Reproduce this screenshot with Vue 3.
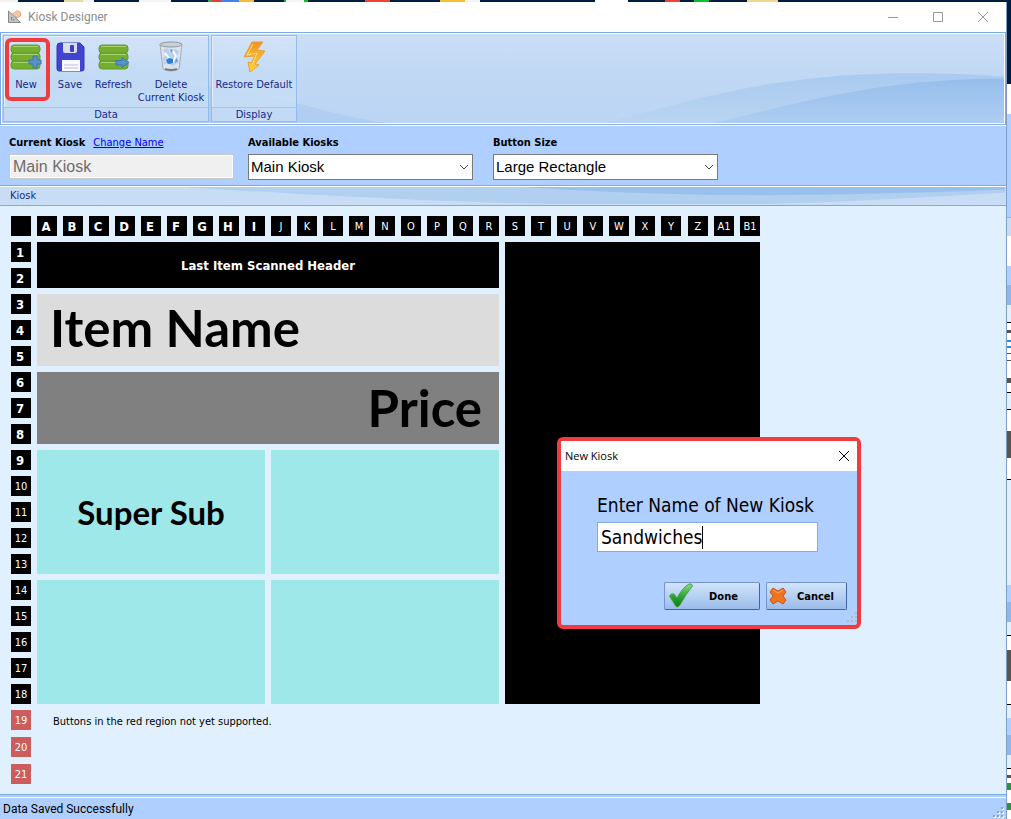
<script setup>
import { ref } from 'vue'

const columns = [...'ABCDEFGHIJKLMNOPQRSTUVWXYZ', 'A1', 'B1']
const rows = Array.from({ length: 21 }, (_, i) => i + 1)
const currentKiosk = ref('Main Kiosk')
const newName = ref('Sandwiches')
</script>

<template>
  <div class="screen">
    <div class="window">
      <header class="titlebar">
        <svg class="app-icon" viewBox="0 0 16 16" width="16" height="16">
          <path d="M1.500 2V13.500H13.500ZM4.500 8L7.500 11H4.500Z" fill="#c4c6c9" fill-rule="evenodd" stroke="#85898e" />
          <path d="M5.500 5L10.500 1.500L13.500 3.500L13.500 7L10 9Z" fill="#f9d3b0" stroke="#e3a57a" />
          <path d="M7.500 6.500L12 3M9 8L13.500 4.500" stroke="#efb88e" />
        </svg>
        <h1>Kiosk Designer</h1>
        <div class="controls">
          <button aria-label="Minimize"><svg width="12" height="12" viewBox="0 0 12 12"><path d="M1 6.500H11" /></svg></button>
          <button aria-label="Maximize"><svg width="12" height="12" viewBox="0 0 12 12"><path d="M1.500 1.500H10.500V10.500H1.500Z" /></svg></button>
          <button aria-label="Close"><svg width="12" height="12" viewBox="0 0 12 12"><path d="M1 1L11 11M11 1L1 11" /></svg></button>
        </div>
      </header>

      <nav class="ribbon">
        <svg class="swoosh" viewBox="0 0 1000 90" preserveAspectRatio="none">
          <defs>
            <linearGradient id="waveA" x1="0" y1="0" x2="0" y2="1"><stop offset="0" stop-color="#a9caef" /><stop offset="1" stop-color="#b9d4f1" /></linearGradient>
            <linearGradient id="waveB" x1="0" y1="0" x2="0" y2="1"><stop offset="0" stop-color="#96beeb" /><stop offset="1" stop-color="#aecdf1" /></linearGradient>
          </defs>
          <path d="M0 44C130 42 240 54 295 70C330 80 355 86 385 90H0Z" fill="#a9caef" opacity=".7" />
          <path d="M600 90C700 66 790 28 1000 43V90Z" fill="url(#waveA)" />
          <path d="M710 90C800 68 880 45 1000 45V90Z" fill="url(#waveB)" />
        </svg>
        <section class="group">
          <div class="tools">
            <button class="tool new">
              <svg width="32" height="32" viewBox="0 0 32 32">
                <g fill="#76ae31" stroke="#5f9c2c"><rect x="1" y="4" width="29" height="8" rx="3" /><rect x="1" y="12" width="29" height="8" rx="3" /><rect x="1" y="20" width="29" height="8" rx="3" /></g>
                <path d="M3 5.500H28M3 13.500H28M3 21.500H28" stroke="#a9d26f" />
                <path d="M23 15H27V19H31V23H27V27H23V23H19V19H23Z" fill="#5792cb" stroke="#3b76b1" />
              </svg>
              <span>New</span>
            </button>
            <button class="tool save">
              <svg width="32" height="32" viewBox="0 0 32 32">
                <path d="M6 2H26L30 6V28Q30 30 28 30H5Q3 30 3 28V5Q3 2 6 2Z" fill="#4144d2" stroke="#3436ad" />
                <path d="M9 2H23V10Q23 12 21 12H11Q9 12 9 10Z" fill="#d9ddec" /><rect x="16" y="4" width="4" height="7" rx="1" fill="#3d40c4" />
                <path d="M8 19H26V30H8Z" fill="#fafafe" /><path d="M10 24H24M10 27H24" stroke="#bbbde0" />
              </svg>
              <span>Save</span>
            </button>
            <button class="tool refresh">
              <svg width="32" height="32" viewBox="0 0 32 32">
                <g fill="#76ae31" stroke="#5f9c2c"><rect x="1" y="4" width="29" height="8" rx="3" /><rect x="1" y="12" width="29" height="8" rx="3" /><rect x="1" y="20" width="29" height="8" rx="3" /></g>
                <path d="M3 5.500H28M3 13.500H28M3 21.500H28" stroke="#a9d26f" />
                <path d="M18 19.500H24V16.500L31 21.500L24 26.500V24H18Z" fill="#5792cb" stroke="#3b76b1" />
              </svg>
              <span>Refresh</span>
            </button>
            <button class="tool delete">
              <svg width="32" height="32" viewBox="0 0 32 32">
                <path d="M5 3L8 28Q16 32 24 28L27 3Z" fill="#dce3eb" stroke="#a5adb7" />
                <ellipse cx="16" cy="3.500" rx="11" ry="2.500" fill="#cbd1d9" stroke="#8f969f" />
                <path d="M8 9L13 7L15 12L20 8L24 10L22 16L24 21L18 25L12 22L9 24L8 17L11 14Z" fill="#b8d0eb" />
                <path d="M10 12L14 17L11 21M18 10L21 15L17 22" stroke="#f8fbff" stroke-width="2" fill="none" />
                <path d="M11 19L14 17L18 18V22L14 23L12 22Z" fill="#2f7bd6" />
                <path d="M15 8L18 9L16 12ZM21 17L23 20L20 22Z" fill="#679bd7" />
                <path d="M10 28Q16 30 22 28" stroke="#777f89" stroke-width="2" fill="none" />
              </svg>
              <span>Delete<br />Current Kiosk</span>
            </button>
          </div>
          <h2>Data</h2>
        </section>
        <section class="group">
          <div class="tools">
            <button class="tool restore">
              <svg width="32" height="32" viewBox="0 0 32 32">
                <defs><linearGradient id="bolt" x1="0" y1="0" x2="0" y2="1"><stop offset="0" stop-color="#ee9126" /><stop offset=".5" stop-color="#f9b72e" /><stop offset="1" stop-color="#ffd72b" /></linearGradient></defs>
                <path d="M14 1H25L19 9L27 10L17 23L21 24L12 31L10 21L13 22L17 15L6 16Z" fill="url(#bolt)" stroke="#e5a03a" />
                <path d="M15 3L9 14L19 12L14 24" stroke="#ffdb82" fill="none" />
              </svg>
              <span>Restore Default</span>
            </button>
          </div>
          <h2>Display</h2>
        </section>
      </nav>

      <form class="filters" @submit.prevent>
        <div class="field">
          <div class="labels"><label for="current">Current Kiosk</label><a href="#">Change Name</a></div>
          <input id="current" v-model="currentKiosk" disabled />
        </div>
        <div class="field">
          <label for="available">Available Kiosks</label>
          <div class="select">
            <select id="available"><option>Main Kiosk</option></select>
            <svg width="10" height="6" viewBox="0 0 10 6"><path d="M1 1L5 5L9 1" /></svg>
          </div>
        </div>
        <div class="field">
          <label for="size">Button Size</label>
          <div class="select">
            <select id="size"><option>Large Rectangle</option></select>
            <svg width="10" height="6" viewBox="0 0 10 6"><path d="M1 1L5 5L9 1" /></svg>
          </div>
        </div>
      </form>

      <div class="caption">
        <svg class="swoosh" viewBox="0 0 1000 18" preserveAspectRatio="none">
          <path d="M180 0C350 11 440 16 560 18H760C860 15 930 10 1000 6V0Z" fill="#b1cfee" />
          <path d="M520 0C700 12 800 10 1000 3V0Z" fill="#98c0ec" />
        </svg>
        <h2>Kiosk</h2>
      </div>

      <main class="canvas">
        <div class="board">
          <span class="cell corner"></span>
          <span v-for="(c, i) in columns" :key="c" class="cell col" :class="{ strong: i < 9 }">{{ c }}</span>
          <span v-for="r in rows" :key="r" class="cell row" :class="{ strong: r < 10, red: r > 18 }">{{ r }}</span>
          <div class="block header">Last Item Scanned Header</div>
          <div class="block name">Item Name</div>
          <div class="block price">Price</div>
          <button class="block item one">Super Sub</button>
          <button class="block item two" aria-label="Empty button"></button>
          <button class="block item three" aria-label="Empty button"></button>
          <button class="block item four" aria-label="Empty button"></button>
          <div class="block list"></div>
          <p class="note">Buttons in the red region not yet supported.</p>
        </div>

        <section class="dialog" role="dialog" aria-labelledby="dialog-title">
          <header>
            <h2 id="dialog-title">New Kiosk</h2>
            <button aria-label="Close dialog"><svg width="12" height="12" viewBox="0 0 12 12"><path d="M1 1L11 11M11 1L1 11" /></svg></button>
          </header>
          <form @submit.prevent>
            <label for="kiosk-name">Enter Name of New Kiosk</label>
            <div class="namebox">
              <input id="kiosk-name" v-model="newName" size="8" /><i class="caret"></i>
            </div>
            <div class="actions">
              <button class="done">
                <svg width="26" height="26" viewBox="0 0 26 26">
                  <defs><linearGradient id="tick" x1="0" y1="0" x2="0" y2="1"><stop offset="0" stop-color="#8fdc83" /><stop offset=".5" stop-color="#35a73a" /><stop offset="1" stop-color="#087d10" /></linearGradient></defs>
                  <path d="M1.500 13Q3 10 6 11L9 15Q15 4 21 1Q24 0 24.500 3Q18 11 12 22Q9 26 7 22Z" fill="url(#tick)" stroke="#48a64b" />
                </svg>
                <span>Done</span>
              </button>
              <button class="cancel">
                <svg width="18" height="18" viewBox="0 0 18 18">
                  <path d="M4 1L9 4L14 1L17 5L14 9L17 13L14 17L9 14L4 17L1 13L4 9L1 5Z" fill="#ef7420" stroke="#cf5312" stroke-linejoin="round" />
                  <path d="M4 3L9 6L14 3" stroke="#f9a365" fill="none" />
                </svg>
                <span>Cancel</span>
              </button>
            </div>
          </form>
          <svg class="grip" width="12" height="12" viewBox="0 0 12 12"><path d="M8 0h2v2h-2zM4 4h2v2H4zM8 4h2v2H8zM0 8h2v2H0zM4 8h2v2H4zM8 8h2v2H8z" fill="#b9b9b0" /></svg>
        </section>
      </main>

      <footer class="status">
        <span>Data Saved Successfully</span>
        <svg width="12" height="12" viewBox="0 0 12 12"><path d="M9 1h2v2H9zM5 5h2v2H5zM9 5h2v2H9zM1 9h2v2H1zM5 9h2v2H5zM9 9h2v2H9z" fill="#fff" /><path d="M8 0h2v2H8zM4 4h2v2H4zM8 4h2v2H8zM0 8h2v2H0zM4 8h2v2H4zM8 8h2v2H8z" fill="#99a0a8" /></svg>
      </footer>
    </div>
    <aside class="behind" aria-hidden="true"></aside>
  </div>
</template>

<style>
body { margin: 0; }
</style>

<style scoped>
* { box-sizing: border-box; }
h1, h2, p { margin: 0; font-weight: 400; }
button { border: 0; padding: 0; margin: 0; background: none; font: inherit; color: inherit; }
svg { display: block; }
.screen {
  min-height: 100vh;
  display: flex;
  padding-top: 2px;
  font: 11px/13px "DejaVu Sans Condensed", "DejaVu Sans", sans-serif;
  color: #000;
  background: linear-gradient(90deg, #f4f4f4 0 18px, #001c40 18px 64px, #e2d9a4 64px 83px, #f4f4f4 83px 94px, #001c40 94px 139px, #f4f4f4 139px 171px, #001c40 171px 208px, #3aa757 208px 212px, #dd4238 212px 221px, #4083ec 221px 239px, #f5bd33 239px 254px, #001c40 254px 284px, #00c22a 284px 286px, #f4f4f4 286px 304px, #00c22a 304px 308px, #001c40 308px 365px, #e43 365px 390px, #001c40 390px 440px, #f5bd33 440px 465px, #f4f4f4 465px 480px, #001c40 480px 595px, #fff 595px 628px, #001c40 628px 665px, #e43 665px 680px, #001c40 680px 694px, #00c22a 694px 709px, #001c40 709px 747px, #f0d68e 747px 778px, #001c40 778px);
}
.window { flex: 1; min-width: 0; display: flex; flex-direction: column; border-right: 1px solid #7f9fc8; background: #e1f0fe; }
.behind {
  width: 4px;
  background: linear-gradient(#001c40 0 82px, #fff 82px 112px, #aecfff 112px 215px, #8fb5e6 215px 216px, #c8dcf4 216px 234px, #fff 234px 264px, #aecfff 264px 283px, #91b7e8 283px 303px, #e1f0fe 303px 320px, #000 320px 321px, #fff 321px 328px, #555 328px 331px, #fff 331px 338px, #2090e0 338px 340px, #fff 340px 344px, #2090e0 344px 346px, #fff 346px 351px, #555 351px 352px, #fff 352px 358px, #555 358px 359px, #fff 359px 376px, #555 376px 381px, #fff 381px 390px, #000 390px 391px, #e1f0fe 391px 407px, #000 407px 408px, #fff 408px 429px, #555 429px 456px, #fff 456px 477px, #000 477px 478px, #e1f0fe 478px 583px, #aecfff 583px 600px, #91b7e8 600px 620px, #e1f0fe 620px 633px, #000 633px 634px, #fff 634px 648px, #555 648px 679px, #fff 679px 702px, #000 702px 703px, #e1f0fe 703px 716px, #aecfff 716px 733px, #91b7e8 733px 753px, #e1f0fe 753px 766px, #000 766px 767px, #fff 767px 773px, #555 773px 776px, #fff 776px 781px, #2f9048 781px 788px, #fff 788px 801px, #2f9048 801px 808px, #fff 808px);
}
.titlebar { height: 30px; display: flex; align-items: center; background: #fff; padding: 0 1px 0 7px; }
.titlebar h1 { margin-left: 5px; font: 12px/16px Roboto, sans-serif; color: #8d8d8d; flex: 1; }
.app-icon { fill: none; }
.controls { display: flex; }
.controls button { width: 45px; height: 28px; display: flex; align-items: center; justify-content: center; }
.controls path { fill: none; stroke: #999; }

.ribbon { position: relative; height: 93px; display: flex; gap: 2px; padding: 2px; border: 1px solid #7caae4; border-bottom-color: #8cb0e5; box-shadow: inset 0 0 0 1px #fff; background: linear-gradient(#cbdff6, #c0d8f3 45%, #bcd5f3); }
.swoosh { position: absolute; inset: 1px; width: calc(100% - 2px); height: calc(100% - 2px); }
.group { position: relative; border: 1px solid #94bbe9; box-shadow: inset 1px 1px 0 #e2eefb; display: flex; flex-direction: column; color: #15298b; text-align: center; background: linear-gradient(#d4e4f8cc, #c4dbf5cc 45%, #cfe2f8cc); }
.tools { flex: 1; display: flex; align-items: flex-start; padding: 3px 3px 0; }
.tool { display: flex; flex-direction: column; align-items: center; justify-content: flex-start; line-height: 13px; }
.tool svg { margin: 2px 0 5px; }
.tool.new { width: 45px; height: 63px; border: 4px solid #f03c3f; border-radius: 6px; margin-top: -1px; margin-left: -2px; padding-right: 3px; }
.tool.new svg { margin-top: -1px; }
.tool.save { width: 40px; }
.tool.refresh { width: 47px; }
.tool.delete { width: 68px; }
.tool.restore { width: 78px; white-space: nowrap; }
.group h2 { height: 14px; font-size: 11px; line-height: 14px; border-top: 1px solid #a5c6ed; background: #c2daf5; }

.filters { height: 60px; display: flex; gap: 14px; padding: 10px 9px 0; background: #aecfff; border-top: 1px solid #fff; }
.field { width: 225px; }
.field + .field + .field { margin-left: 6px; }
.field label { display: block; font-weight: 700; line-height: 13px; }
.labels { display: flex; gap: 8px; }
.labels a { color: #0000f0; }
.field > input { display: block; width: 100%; height: 25px; margin-top: 5px; padding: 0 3px; border: 1px solid #c8c8c8; outline: 1px solid #fff; outline-offset: -2px; background: #f0f0f0; color: #6d6d6d; font: 16px/20px "Liberation Sans", sans-serif; border-radius: 0; }
.select { position: relative; margin-top: 5px; }
.select select { appearance: none; display: block; width: 100%; height: 26px; padding: 0 2px; border: 1px solid #7a7a7a; border-radius: 0; background: #fff; color: #000; font: 15px/20px "Liberation Sans", sans-serif; }
.select svg { position: absolute; right: 4px; top: 10px; fill: none; stroke: #444; pointer-events: none; }

.caption { position: relative; height: 21px; border-top: 1px solid #7caae4; border-bottom: 1px solid #7caae4; background: #c8ddf5; box-shadow: inset 0 1px 0 #fff; }
.caption h2 { position: relative; padding-left: 10px; font-size: 11px; line-height: 20px; color: #15298b; }

.canvas { position: relative; flex: 1; padding: 10px 11px; }
.board { display: grid; grid-template-columns: repeat(26, 20px) 21px 20px 20px; grid-template-rows: repeat(20, 20px) 21px 21px; gap: 6px; }
.cell { width: 20px; height: 20px; justify-self: end; align-self: end; background: #000; color: #fff; line-height: 21px; text-align: center; white-space: nowrap; }
.col, .corner { grid-row: 1; }
.row { grid-column: 1; }
.strong { font-size: 13px; font-weight: 700; }
.cell.strong { padding-right: 2px; }
.red { background: #cd5c5c; }
.block { display: flex; align-items: center; justify-content: center; font-weight: 700; }
.header { grid-area: 2 / 2 / 4 / 20; background: #000; color: #fff; font-size: 13px; }
.name { grid-area: 4 / 2 / 7 / 20; justify-content: flex-start; padding: 0 13px 4px; background: #dcdcdc; font: 700 51px/60px Lato, sans-serif; }
.price { grid-area: 7 / 2 / 10 / 20; justify-content: flex-end; padding: 0 17px; background: #808080; font: 700 51px/60px Lato, sans-serif; }
.item { background: #9ee8e9; font: 700 33px/40px Lato, sans-serif; }
.one { grid-area: 10 / 2 / 15 / 11; }
.two { grid-area: 10 / 11 / 15 / 20; }
.three { grid-area: 15 / 2 / 20 / 11; }
.four { grid-area: 15 / 11 / 20 / 20; }
.list { grid-area: 2 / 20 / 20 / 30; background: #000; }
.note { grid-area: 20 / 2 / 21 / 20; padding-left: 16px; line-height: 24px; }

.dialog { position: absolute; left: 557px; top: 231px; width: 304px; height: 192px; border: 4px solid #f03c3f; border-radius: 6px; background: #aecfff; }
.dialog header { height: 30px; display: flex; align-items: center; justify-content: space-between; padding: 0 7px 0 4px; background: #fff; }
.dialog h2 { font: 11px/16px "Open Sans", sans-serif; }
.dialog header path { fill: none; stroke: #000; }
.dialog form { padding: 23px 10px 0 36px; }
.dialog label { display: block; font-size: 19px; line-height: 23px; white-space: nowrap; }
.namebox { width: 221px; height: 30px; margin-top: 5px; display: flex; align-items: center; padding-left: 3px; border: 1px solid #84aae3; background: #fff; }
.namebox input { width: 101px; border: 0; padding: 0; outline: 0; background: none; font: 19px/24px "DejaVu Sans Condensed", sans-serif; }
.caret { width: 1px; height: 23px; background: #000; }
.actions { display: flex; gap: 6px; margin-top: 30px; justify-content: flex-end; }
.actions button { height: 28px; display: flex; align-items: center; border: 1px solid #7795cb; border-right-color: #3e62ab; border-bottom-color: #3e62ab; border-radius: 2px; background: linear-gradient(#d1e4fb, #9bbce9); font-weight: 700; }
.actions span { flex: 1; text-align: center; }
.actions .done { width: 96px; padding: 0 6px 0 3px; }
.actions .cancel { width: 81px; padding: 0 2px; }
.dialog .grip { position: absolute; right: -2px; bottom: 1px; }

.status { height: 25px; display: flex; align-items: center; justify-content: space-between; border-top: 1px solid #7caae4; padding: 4px 1px 0 3px; background: linear-gradient(#aecfff 0 2px, #fff 2px 3px, #aecfff 3px); font: 12px/16px Roboto, sans-serif; }
.status svg { align-self: flex-end; }
</style>
